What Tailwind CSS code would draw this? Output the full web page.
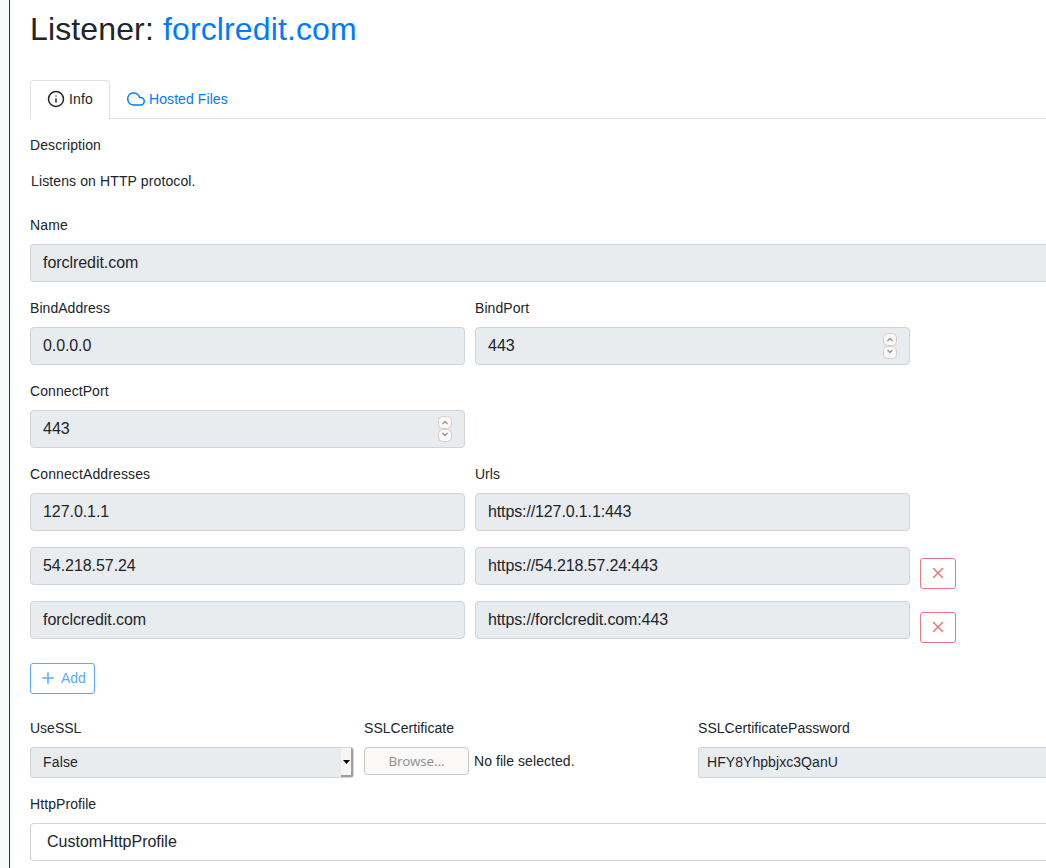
<!DOCTYPE html>
<html lang="en">
<head>
<meta charset="utf-8">
<title>Listener</title>
<script src="https://cdn.jsdelivr.net/npm/@tailwindcss/browser@4"></script>
</head>
<body class="flex h-[868px] w-[1046px] overflow-hidden bg-white font-['Liberation_Sans',Arial,sans-serif] text-sm leading-[21px] text-[#212529]">
<aside class="w-[10px] shrink-0 border-r border-[#343a40] bg-[#f8f9fa]"></aside>
<main class="min-w-0 flex-1 pl-5">
  <h1 class="mt-[10px] h-[38px] text-[32px] leading-[38px] tracking-[0.13px]">Listener: <a class="text-[#007bff]">forclredit.com</a></h1>
  <nav class="mt-8 flex h-[39px] border-b border-[#dee2e6]">
    <a class="flex h-[39px] w-20 items-center gap-1 rounded-t border border-b-0 border-[#dee2e6] bg-white pb-[2px] pl-4 tracking-[0.15px] text-[#212529]">
      <svg class="size-[18px]" viewBox="0 0 24 24" fill="none" stroke="currentColor" stroke-width="2" stroke-linecap="round"><circle cx="12" cy="12" r="10"/><path d="M12 16v-4M12 8h.01"/></svg>Info</a>
    <a class="flex h-[38px] items-center gap-1 pl-[17px] tracking-[0.08px] text-[#007bff]">
      <svg class="size-[18px]" viewBox="0 0 24 24" fill="none" stroke="currentColor" stroke-width="2" stroke-linejoin="round"><path d="M18 10h-1.26A8 8 0 1 0 9 20h9a5 5 0 0 0 0-10z"/></svg>Hosted Files</a>
  </nav>
  <label class="mt-4 block tracking-[0.08px]">Description</label>
  <p class="mt-2 h-[35px] pt-[7px] pl-px tracking-[0.12px]">Listens on HTTP protocol.</p>
  <label class="mt-4 block tracking-[0.15px]">Name</label>
  <div class="mt-2 h-[38px] rounded-l border border-r-0 border-[#ced4da] bg-[#e9ecef] px-3 text-base leading-9 tracking-[-0.05px]">forclredit.com</div>

  <div class="mt-4 grid grid-cols-[435px_435px] gap-x-[10px] gap-y-4">
    <div><label class="block tracking-[0.05px]">BindAddress</label>
      <div class="mt-2 h-[38px] rounded border border-[#ced4da] bg-[#e9ecef] px-3 text-base leading-9 tracking-[-0.1px]">0.0.0.0</div></div>
    <div><label class="block tracking-[0.08px]">BindPort</label>
      <div class="mt-2 flex h-[38px] items-center justify-between rounded border border-[#ced4da] bg-[#e9ecef] px-3 text-base leading-9"><span class="h-9">443</span>
        <svg class="h-[26px] w-[14px]" viewBox="0 0 14 26" fill="#faf9f8" stroke="#d5cdc7"><rect x=".5" y=".5" width="13" height="12" rx="4"/><rect x=".5" y="13.5" width="13" height="12" rx="4"/><path d="M4.5 8 7 5.5 9.5 8M4.5 17 7 19.5 9.5 17" fill="none" stroke="#929595" stroke-width="1.4"/></svg></div></div>
    <div><label class="block tracking-[0.08px]">ConnectPort</label>
      <div class="mt-2 flex h-[38px] items-center justify-between rounded border border-[#ced4da] bg-[#e9ecef] px-3 text-base leading-9"><span class="h-9">443</span>
        <svg class="h-[26px] w-[14px]" viewBox="0 0 14 26" fill="#faf9f8" stroke="#d5cdc7"><rect x=".5" y=".5" width="13" height="12" rx="4"/><rect x=".5" y="13.5" width="13" height="12" rx="4"/><path d="M4.5 8 7 5.5 9.5 8M4.5 17 7 19.5 9.5 17" fill="none" stroke="#929595" stroke-width="1.4"/></svg></div></div>
  </div>

  <div class="mt-4 grid grid-cols-[435px_435px_36px] gap-x-[10px]">
    <label class="tracking-[0.12px]">ConnectAddresses</label><label>Urls</label>
  </div>
  <div class="mt-2 grid grid-cols-[435px_435px_36px] gap-x-[10px] gap-y-4 text-base leading-9">
    <div class="h-[38px] rounded border border-[#ced4da] bg-[#e9ecef] px-3 tracking-[-0.06px]">127.0.1.1</div>
    <div class="h-[38px] rounded border border-[#ced4da] bg-[#e9ecef] px-3 tracking-[-0.12px]">https://127.0.1.1:443</div>
    <div></div>
    <div class="h-[38px] rounded border border-[#ced4da] bg-[#e9ecef] px-3 tracking-[-0.06px]">54.218.57.24</div>
    <div class="h-[38px] rounded border border-[#ced4da] bg-[#e9ecef] px-3 tracking-[-0.12px]">https://54.218.57.24:443</div>
    <div class="h-[38px] pt-[11px]"><button class="flex h-[31px] w-9 items-center justify-center rounded-[3px] border border-[#e77681] text-[#e77681]"><svg class="mb-[2px] size-[18px]" viewBox="0 0 24 24" fill="none" stroke="currentColor" stroke-width="2" stroke-linecap="round"><path d="M18 6 6 18M6 6l12 12"/></svg></button></div>
    <div class="h-[38px] rounded border border-[#ced4da] bg-[#e9ecef] px-3 tracking-[-0.06px]">forclcredit.com</div>
    <div class="h-[38px] rounded border border-[#ced4da] bg-[#e9ecef] px-3 tracking-[-0.12px]">https://forclcredit.com:443</div>
    <div class="h-[38px] pt-[11px]"><button class="flex h-[31px] w-9 items-center justify-center rounded-[3px] border border-[#e77681] text-[#e77681]"><svg class="mb-[2px] size-[18px]" viewBox="0 0 24 24" fill="none" stroke="currentColor" stroke-width="2" stroke-linecap="round"><path d="M18 6 6 18M6 6l12 12"/></svg></button></div>
  </div>
  <button class="mt-6 flex h-[31px] w-[65px] items-center gap-1 rounded-[3px] border border-[#59a9ff] pl-2 text-[#59a9ff]"><svg class="mb-[2px] size-[18px]" viewBox="0 0 24 24" fill="none" stroke="currentColor" stroke-width="2" stroke-linecap="round"><path d="M12 5v14M5 12h14"/></svg>Add</button>

  <div class="mt-6 grid grid-cols-[324px_324px_1fr] gap-x-[10px]">
    <div><label class="block">UseSSL</label>
      <div class="mt-2 flex h-[31px] justify-between rounded-[3px] border border-[#ced4da] bg-[#e9ecef] pl-3 leading-[29px]"><span class="tracking-[0.15px]">False</span>
        <span class="flex h-[29px] w-[12px] items-center justify-center rounded-r-[2px] border-r-2 border-b-2 border-[#a09f9e] border-b-[#a09f9e] bg-[#f6f5f4]"><svg class="h-1 w-[7px] shrink-0" viewBox="0 0 7 4"><path d="M0 0h7L3.5 4z"/></svg></span></div></div>
    <div><label class="block tracking-[0.04px]">SSLCertificate</label>
      <div class="mt-2 flex gap-[5px]"><button class="h-[28px] w-[105px] rounded border border-[#cdc7c2] bg-[#faf9f8] font-['Noto_Sans',sans-serif] text-[13.33px] tracking-[-0.1px] text-[#929595]">Browse…</button><span class="leading-[28px] tracking-[0.06px]">No file selected.</span></div></div>
    <div><label class="block tracking-[0.04px]">SSLCertificatePassword</label>
      <div class="mt-2 h-[31px] rounded-l-[3px] border border-r-0 border-[#ced4da] bg-[#e9ecef] px-2 leading-[29px] tracking-[0.06px]">HFY8Yhpbjxc3QanU</div></div>
  </div>
  <label class="mt-4 block tracking-[0.08px]">HttpProfile</label>
  <div class="mt-2 h-[38px] rounded-l border border-r-0 border-[#ced4da] bg-white px-4 text-base leading-9">CustomHttpProfile</div>
</main>
</body>
</html>
